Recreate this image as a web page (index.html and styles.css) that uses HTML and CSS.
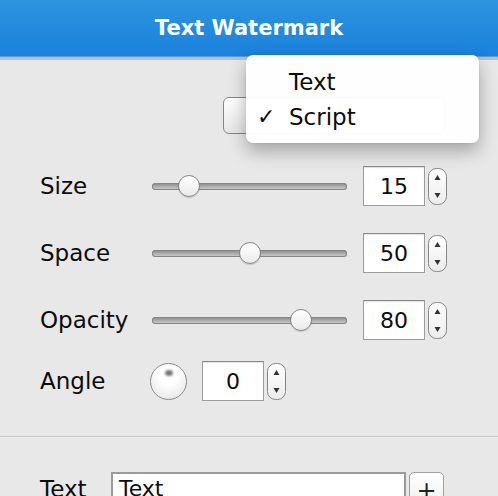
FILE: index.html
```html
<!DOCTYPE html>
<html lang="en">
<head>
  <meta charset="UTF-8" />
  <title>Text Watermark</title>
  <link rel="stylesheet" href="styles.css">
</head>
<body>
  <div class="window">
    <header class="titlebar">Text Watermark</header>

    <main class="panel">
      <div class="mode-row">
        <div class="popup-btn"></div>
      </div>

      <div class="controls">
        <div class="row">
          <span class="label">Size</span>
          <div class="slider"><div class="lane"><div class="thumb" style="left: 15%"></div></div></div>
          <div class="field">15</div>
          <svg class="stepper" width="19" height="37" viewBox="0 0 19 37">
            <rect x="0.5" y="0.5" width="18" height="36" rx="8" fill="url(#stepGrad)" stroke="#868686"/>
            <path d="M6.5 12 L12.5 12 L9.5 7 Z" fill="#333"/>
            <path d="M6.5 25 L12.5 25 L9.5 30 Z" fill="#333"/>
          </svg>
        </div>

        <div class="row">
          <span class="label">Space</span>
          <div class="slider"><div class="lane"><div class="thumb" style="left: 50%"></div></div></div>
          <div class="field">50</div>
          <svg class="stepper" width="19" height="37" viewBox="0 0 19 37">
            <rect x="0.5" y="0.5" width="18" height="36" rx="8" fill="url(#stepGrad)" stroke="#868686"/>
            <path d="M6.5 12 L12.5 12 L9.5 7 Z" fill="#333"/>
            <path d="M6.5 25 L12.5 25 L9.5 30 Z" fill="#333"/>
          </svg>
        </div>

        <div class="row">
          <span class="label">Opacity</span>
          <div class="slider"><div class="lane"><div class="thumb" style="left: 80%"></div></div></div>
          <div class="field">80</div>
          <svg class="stepper" width="19" height="37" viewBox="0 0 19 37">
            <rect x="0.5" y="0.5" width="18" height="36" rx="8" fill="url(#stepGrad)" stroke="#868686"/>
            <path d="M6.5 12 L12.5 12 L9.5 7 Z" fill="#333"/>
            <path d="M6.5 25 L12.5 25 L9.5 30 Z" fill="#333"/>
          </svg>
        </div>

        <div class="row angle-row">
          <span class="label">Angle</span>
          <div class="knob"></div>
          <div class="field">0</div>
          <svg class="stepper" width="19" height="37" viewBox="0 0 19 37">
            <rect x="0.5" y="0.5" width="18" height="36" rx="8" fill="url(#stepGrad)" stroke="#868686"/>
            <path d="M6.5 12 L12.5 12 L9.5 7 Z" fill="#333"/>
            <path d="M6.5 25 L12.5 25 L9.5 30 Z" fill="#333"/>
          </svg>
        </div>
      </div>

      <div class="divider"></div>

      <div class="text-row">
        <span class="label">Text</span>
        <div class="text-input">Text</div>
        <div class="add-btn">+</div>
      </div>
    </main>

    <!-- dropdown opened from the mode button -->
    <div class="menu">
      <div class="menu-item"><span class="check"></span>Text</div>
      <div class="menu-item"><span class="check">✓</span>Script</div>
    </div>
  </div>

  <svg width="0" height="0" class="defs">
    <defs>
      <linearGradient id="stepGrad" x1="0" y1="0" x2="0" y2="1">
        <stop offset="0" stop-color="#ffffff"/>
        <stop offset="1" stop-color="#ececec"/>
      </linearGradient>
    </defs>
  </svg>
</body>
</html>
```

FILE: styles.css
```css
* { box-sizing: border-box; }
body {
  margin: 0; padding: 0;
  background: #e8e8e8;
  font-family: "DejaVu Sans", "Liberation Sans", sans-serif;
  color: #0c0c0c;
  overflow: hidden;
}
.defs { position: absolute; }
.window {
  position: relative;
  width: 498px; height: 496px;
  overflow: hidden;
}
.titlebar {
  height: 60px;
  padding-top: 15px;
  text-align: center;
  font-size: 21px; font-weight: bold;
  line-height: 27px;
  color: #fff;
  background: linear-gradient(#2d94df, #1a81dc);
  border-bottom: 3px solid #b3c2ce;
  box-shadow: inset 0 -1px 0 #5d9bd2;
}
.panel {
  padding-left: 40px;
}
.mode-row {
  padding-top: 37px;
  padding-left: 183px;
}
.popup-btn {
  width: 222px; height: 37px;
  border: 1px solid #868686;
  border-radius: 6px;
  background: linear-gradient(#ffffff, #e6e6e6);
}
.controls {
  margin-top: 32px;
  display: flex; flex-direction: column;
  gap: 27px;
}
.row {
  display: flex; align-items: center;
  height: 40px;
}
.angle-row {
  margin-top: -6px;
}
.label {
  font-size: 23px;
  width: 112px;
  flex-shrink: 0;
}
.angle-row .label { width: 110px; }
.slider {
  width: 195px; height: 7px;
  border-radius: 4px;
  background: linear-gradient(#858585, #b5b5b5 60%, #d0d0d0);
  box-shadow: inset 0 0 0 1px #858585;
  margin-right: 16px;
}
.lane {
  position: relative;
  height: 100%;
  margin: 0 11px;
}
.thumb {
  position: absolute; top: -8px;
  width: 22px; height: 22px;
  margin-left: -11px;
  border-radius: 50%;
  border: 1px solid #858585;
  background: linear-gradient(#ffffff, #eaeaea);
  box-shadow: 0 1px 1px rgba(0,0,0,0.15);
}
.field {
  width: 62px; height: 40px;
  background: #fff;
  border: 1px solid #9c9c9c;
  border-top-color: #888;
  box-shadow: inset 0 1px 1px rgba(0,0,0,0.12);
  font-size: 22px;
  text-align: center;
  line-height: 40px;
  margin-right: 3px;
}
.stepper { flex-shrink: 0; }
.knob {
  position: relative;
  width: 37px; height: 37px;
  border-radius: 50%;
  border: 1px solid #8a8a8a;
  background: radial-gradient(circle at 50% 35%, #ffffff 30%, #ebebeb 75%, #d6d6d6);
  margin-right: 15px;
}
.knob::after {
  content: "";
  position: absolute; left: 14px; top: 6px;
  width: 8px; height: 6px;
  border-radius: 50%;
  background: #777;
  filter: blur(1px);
}
.divider {
  margin: 35px 0 0 -40px;
  height: 2px;
  background: #c6c6c6;
  border-bottom: 1px solid #ededed;
}
.text-row {
  display: flex; align-items: flex-start;
  margin-top: 34px;
}
.text-row .label {
  width: 71px;
  padding-top: 4px;
}
.text-input {
  width: 295px; height: 36px;
  background: #fff;
  border: 2px solid #9a9a9a;
  font-size: 22px;
  padding: 2px 6px;
  margin-right: 3px;
}
.add-btn {
  width: 35px; height: 34px;
  border: 1px solid #a0a0a0;
  border-radius: 5px;
  background: linear-gradient(#ffffff, #efefef);
  text-align: center;
  font-size: 24px;
  line-height: 36px;
  color: #222;
}
.menu {
  position: absolute; left: 246px; top: 55px;
  width: 233px; height: 88px;
  padding-top: 9px;
  background: rgba(255,255,255,0.96);
  border-radius: 7px;
  box-shadow: 0 8px 18px rgba(0,0,0,0.3), 0 0 1px rgba(0,0,0,0.3);
  z-index: 5;
}
.menu-item {
  display: flex; align-items: center;
  height: 35px;
  font-size: 23px;
  color: #0c0c0c;
}
.check {
  width: 43px;
  padding-left: 11px;
  font-size: 22px;
}
```
